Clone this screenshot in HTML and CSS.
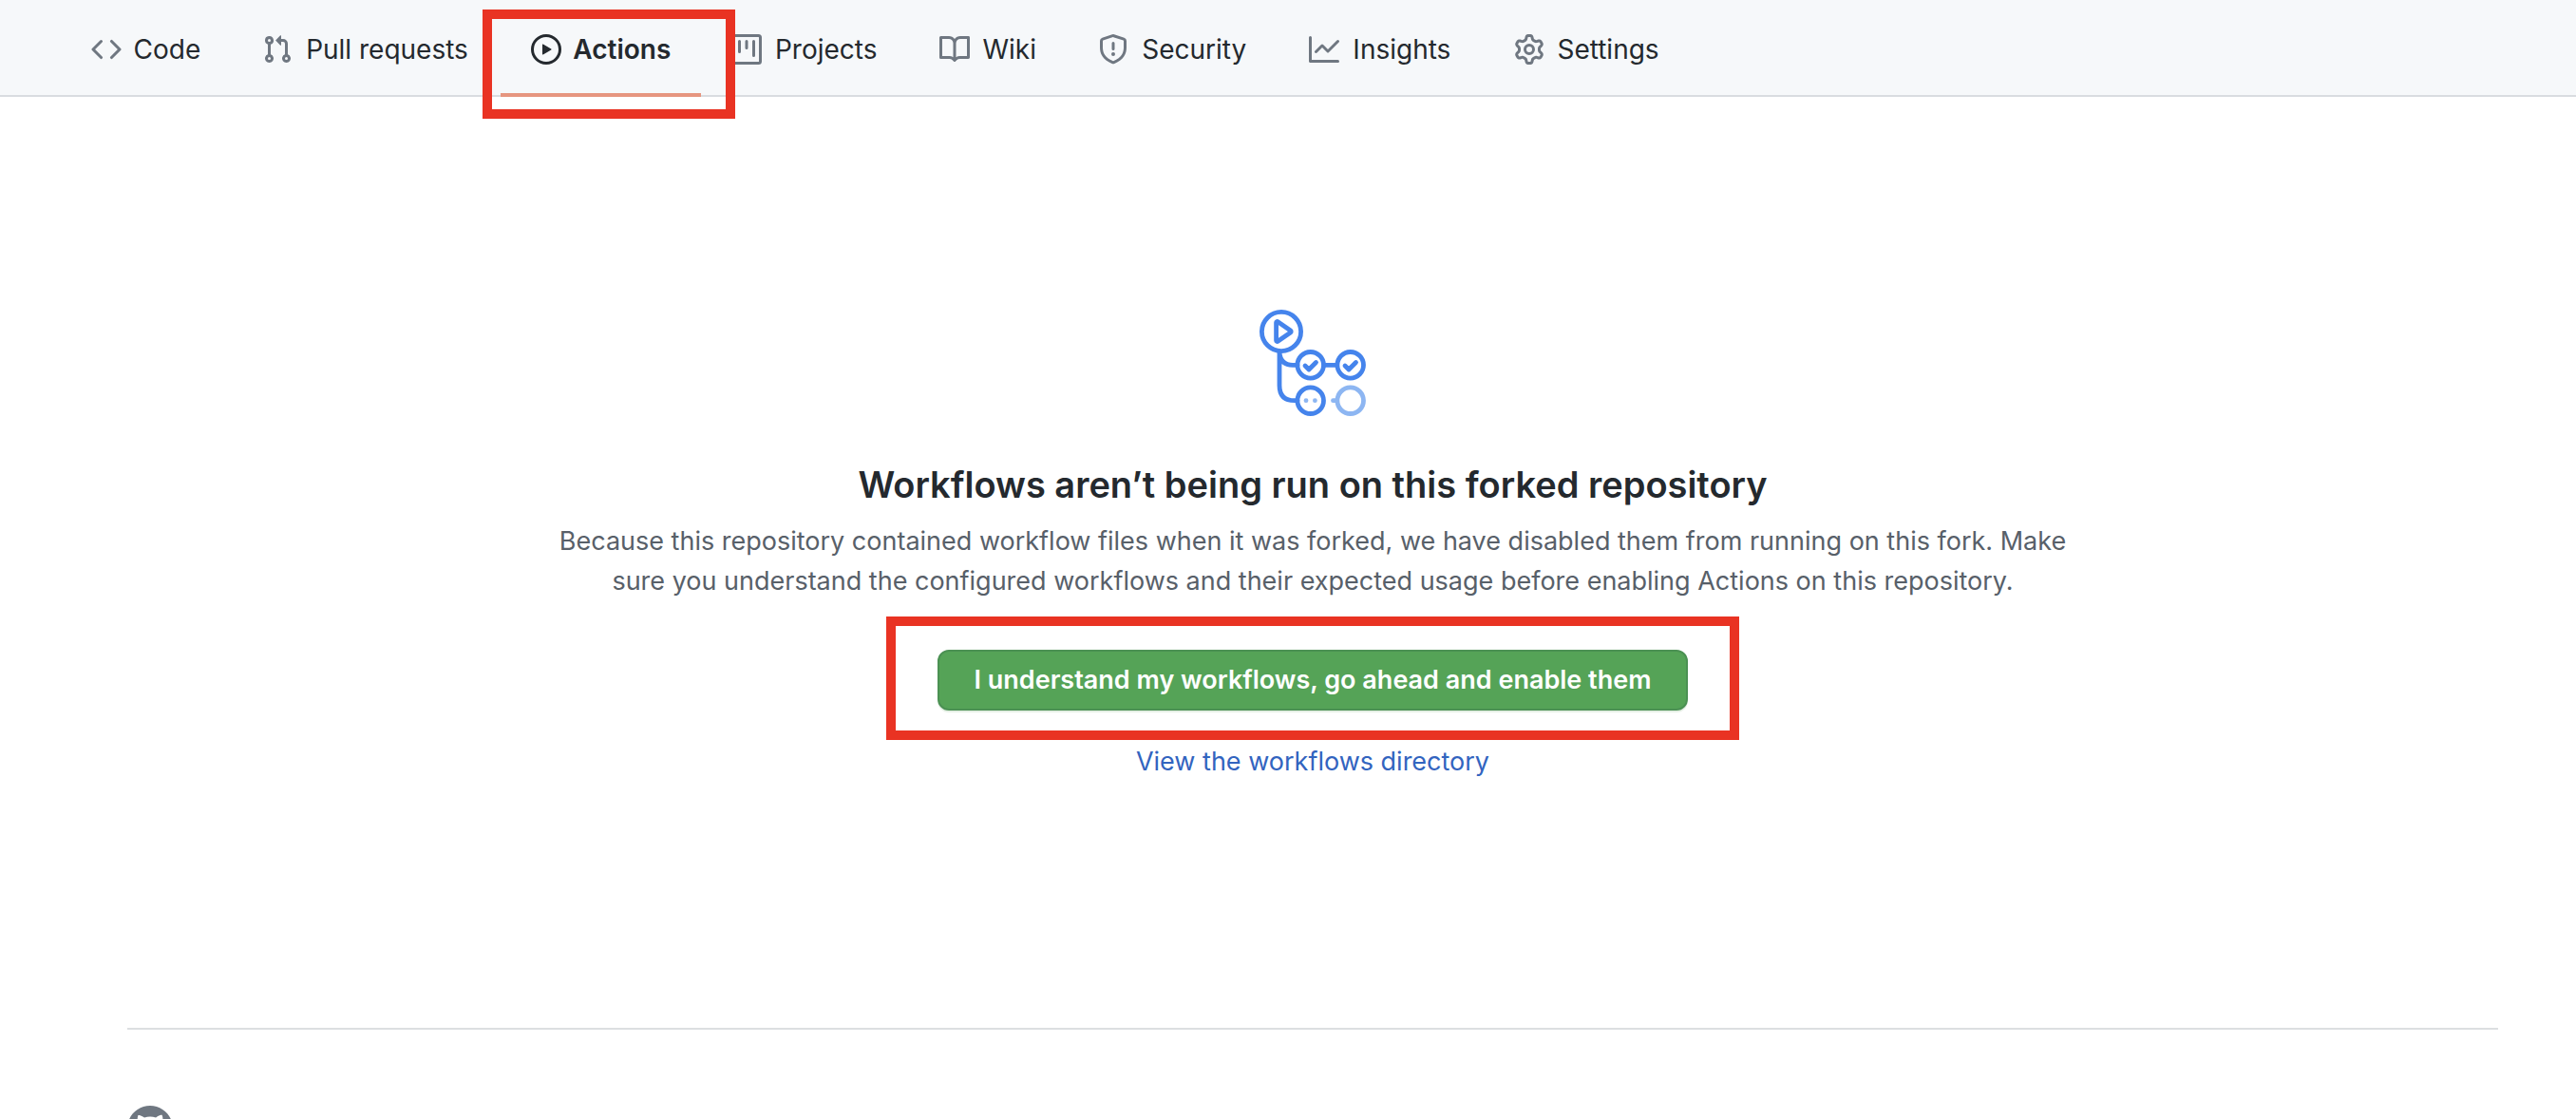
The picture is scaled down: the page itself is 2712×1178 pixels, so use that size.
FILE: index.html
```html
<!DOCTYPE html>
<html lang="en">
<head>
<meta charset="utf-8">
<meta name="viewport" content="width=device-width, initial-scale=1">
<title>Actions</title>
<link rel="stylesheet" href="styles.css">
</head>
<body>
<header class="repo-header">
  <nav class="tabs" aria-label="Repository">
    <a class="tab" href="#code">
      <svg class="tab-icon" viewBox="0 0 16 16" aria-hidden="true"><path fill-rule="evenodd" d="M4.72 3.22a.75.75 0 011.06 1.06L2.06 8l3.72 3.72a.75.75 0 11-1.06 1.06L.47 8.53a.75.75 0 010-1.06l4.25-4.25zm6.56 0a.75.75 0 10-1.06 1.06L13.94 8l-3.72 3.72a.75.75 0 101.06 1.06l4.25-4.25a.75.75 0 000-1.06l-4.25-4.25z"/></svg>
      <span class="tab-label" data-content="Code">Code</span>
    </a>
    <a class="tab" href="#pulls">
      <svg class="tab-icon" viewBox="0 0 16 16" aria-hidden="true"><path fill-rule="evenodd" d="M7.177 3.073L9.573.677A.25.25 0 0110 .854v4.792a.25.25 0 01-.427.177L7.177 3.427a.25.25 0 010-.354zM3.75 2.5a.75.75 0 100 1.5.75.75 0 000-1.5zm-2.25.75a2.25 2.25 0 113 2.122v5.256a2.251 2.251 0 11-1.5 0V5.372A2.25 2.25 0 011.5 3.25zM11 2.5h-1V4h1a1 1 0 011 1v5.628a2.251 2.251 0 101.5 0V5A2.5 2.5 0 0011 2.5zm1 10.25a.75.75 0 111.5 0 .75.75 0 01-1.5 0zM3.75 12a.75.75 0 100 1.5.75.75 0 000-1.5z"/></svg>
      <span class="tab-label" data-content="Pull requests">Pull requests</span>
    </a>
    <a class="tab tab-selected" href="#actions" aria-current="page">
      <svg class="tab-icon" viewBox="0 0 16 16" aria-hidden="true"><path fill-rule="evenodd" d="M1.5 8a6.5 6.5 0 1113 0 6.5 6.5 0 01-13 0zM8 0a8 8 0 100 16A8 8 0 008 0zM6.379 5.227A.25.25 0 006 5.442v5.117a.25.25 0 00.379.214l4.264-2.559a.25.25 0 000-.428L6.379 5.227z"/></svg>
      <span class="tab-label" data-content="Actions">Actions</span>
      <span class="highlight highlight-tab"></span>
    </a>
    <a class="tab" href="#projects">
      <svg class="tab-icon" viewBox="0 0 16 16" aria-hidden="true"><path fill-rule="evenodd" d="M1.75 0A1.75 1.75 0 000 1.75v12.5C0 15.216.784 16 1.75 16h12.5A1.75 1.75 0 0016 14.25V1.75A1.75 1.75 0 0014.25 0H1.75zM1.5 1.75a.25.25 0 01.25-.25h12.5a.25.25 0 01.25.25v12.5a.25.25 0 01-.25.25H1.75a.25.25 0 01-.25-.25V1.75zM11.75 3a.75.75 0 00-.75.75v7.5a.75.75 0 001.5 0v-7.5a.75.75 0 00-.75-.75zm-8.25.75a.75.75 0 011.5 0v5.5a.75.75 0 01-1.5 0v-5.5zM8 3a.75.75 0 00-.75.75v3.5a.75.75 0 001.5 0v-3.5A.75.75 0 008 3z"/></svg>
      <span class="tab-label" data-content="Projects">Projects</span>
    </a>
    <a class="tab" href="#wiki">
      <svg class="tab-icon" viewBox="0 0 16 16" aria-hidden="true"><path fill-rule="evenodd" d="M0 1.75A.75.75 0 01.75 1h4.253c1.227 0 2.317.59 3 1.501A3.744 3.744 0 0111.006 1h4.245a.75.75 0 01.75.75v10.5a.75.75 0 01-.75.75h-4.507a2.25 2.25 0 00-1.591.659l-.622.621a.75.75 0 01-1.06 0l-.622-.621A2.25 2.25 0 005.258 13H.75a.75.75 0 01-.75-.75V1.75zm8.755 3a2.25 2.25 0 012.25-2.25H14.5v9h-3.757c-.71 0-1.4.201-1.992.572l.004-7.322zm-1.504 7.324l.004-5.073-.002-2.253A2.25 2.25 0 005.003 2.5H1.5v9h3.757a3.75 3.75 0 011.994.574z"/></svg>
      <span class="tab-label" data-content="Wiki">Wiki</span>
    </a>
    <a class="tab" href="#security">
      <svg class="tab-icon" viewBox="0 0 16 16" aria-hidden="true"><path fill-rule="evenodd" d="M7.467.133a1.75 1.75 0 011.066 0l5.25 1.68A1.75 1.75 0 0115 3.48V7c0 1.566-.32 3.182-1.303 4.682-.983 1.498-2.585 2.813-5.032 3.855a1.7 1.7 0 01-1.33 0c-2.447-1.042-4.049-2.357-5.032-3.855C1.32 10.182 1 8.566 1 7V3.48a1.75 1.75 0 011.217-1.667l5.25-1.68zm.61 1.429a.25.25 0 00-.153 0l-5.25 1.68a.25.25 0 00-.174.238V7c0 1.358.275 2.666 1.057 3.86.784 1.194 2.121 2.34 4.366 3.297a.2.2 0 00.154 0c2.245-.956 3.582-2.104 4.366-3.298C13.225 9.666 13.5 8.36 13.5 7V3.48a.25.25 0 00-.174-.237l-5.25-1.68zM9 10.5a1 1 0 11-2 0 1 1 0 012 0zm-.25-5.75a.75.75 0 10-1.5 0v3a.75.75 0 001.5 0v-3z"/></svg>
      <span class="tab-label" data-content="Security">Security</span>
    </a>
    <a class="tab" href="#insights">
      <svg class="tab-icon" viewBox="0 0 16 16" aria-hidden="true"><path fill-rule="evenodd" d="M1.5 1.75a.75.75 0 00-1.5 0v12.5c0 .414.336.75.75.75h14.5a.75.75 0 000-1.5H1.5V1.75zm14.28 2.53a.75.75 0 00-1.06-1.06L10 7.94 7.53 5.47a.75.75 0 00-1.06 0L3.22 8.72a.75.75 0 001.06 1.06L7 7.06l2.47 2.47a.75.75 0 001.06 0l5.25-5.25z"/></svg>
      <span class="tab-label" data-content="Insights">Insights</span>
    </a>
    <a class="tab" href="#settings">
      <svg class="tab-icon" viewBox="0 0 16 16" aria-hidden="true"><path fill-rule="evenodd" d="M7.429 1.525a6.593 6.593 0 011.142 0c.036.003.108.036.137.146l.289 1.105c.147.56.55.967.997 1.189.174.086.341.183.501.29.417.278.97.423 1.53.27l1.102-.303c.11-.03.175.016.195.046.219.31.41.641.573.989.014.031.022.11-.059.19l-.815.806c-.411.406-.562.957-.53 1.456a4.588 4.588 0 010 .582c-.032.499.119 1.05.53 1.456l.815.806c.08.08.073.159.059.19a6.494 6.494 0 01-.573.99c-.02.029-.086.074-.195.045l-1.103-.303c-.559-.153-1.112-.008-1.529.27-.16.107-.327.204-.5.29-.449.222-.851.628-.998 1.189l-.289 1.105c-.029.11-.101.143-.137.146a6.613 6.613 0 01-1.142 0c-.036-.003-.108-.037-.137-.146l-.289-1.105c-.147-.56-.55-.967-.997-1.189a4.502 4.502 0 01-.501-.29c-.417-.278-.97-.423-1.53-.27l-1.102.303c-.11.03-.175-.016-.195-.046a6.492 6.492 0 01-.573-.989c-.014-.031-.022-.11.059-.19l.815-.806c.411-.406.562-.957.53-1.456a4.587 4.587 0 010-.582c.032-.499-.119-1.05-.53-1.456l-.815-.806c-.08-.08-.073-.159-.059-.19a6.44 6.44 0 01.573-.99c.02-.029.086-.075.195-.045l1.103.303c.559.153 1.112.008 1.529-.27.16-.107.327-.204.5-.29.449-.222.851-.628.998-1.189l.289-1.105c.029-.11.101-.143.137-.146zM8 0c-.236 0-.47.01-.701.03-.743.065-1.29.615-1.458 1.261l-.29 1.106c-.017.066-.078.158-.211.224a5.994 5.994 0 00-.668.386c-.123.082-.233.09-.3.071L3.27 2.776c-.644-.177-1.392.02-1.82.63a7.977 7.977 0 00-.704 1.217c-.315.675-.111 1.422.363 1.891l.815.806c.05.048.098.147.088.294a6.084 6.084 0 000 .772c.01.147-.038.246-.088.294l-.815.806c-.474.469-.678 1.216-.363 1.891.2.428.436.835.704 1.218.428.609 1.176.806 1.82.63l1.103-.303c.066-.019.176-.011.299.071.213.143.436.272.668.386.133.066.194.158.212.224l.289 1.106c.169.646.715 1.196 1.458 1.26a8.094 8.094 0 001.402 0c.743-.064 1.29-.614 1.458-1.26l.29-1.106c.017-.066.078-.158.211-.224a5.98 5.98 0 00.668-.386c.123-.082.233-.09.3-.071l1.102.302c.644.177 1.392-.02 1.82-.63.268-.382.505-.789.704-1.217.315-.675.111-1.422-.364-1.891l-.814-.806c-.05-.048-.098-.147-.088-.294a6.1 6.1 0 000-.772c-.01-.147.039-.246.088-.294l.814-.806c.475-.469.679-1.216.364-1.891a7.992 7.992 0 00-.704-1.218c-.428-.609-1.176-.806-1.82-.63l-1.103.303c-.066.019-.176.011-.299-.071a5.991 5.991 0 00-.668-.386c-.133-.066-.194-.158-.212-.224L10.16 1.29C9.99.645 9.444.095 8.701.031A8.094 8.094 0 008 0zm1.5 8a1.5 1.5 0 11-3 0 1.5 1.5 0 013 0zM11 8a3 3 0 11-6 0 3 3 0 016 0z"/></svg>
      <span class="tab-label" data-content="Settings">Settings</span>
    </a>
  </nav>
</header>
<main class="blank">
  <svg class="blank-icon" viewBox="0 0 114 114" fill="none" stroke="#4584ec" stroke-width="4.8" stroke-linecap="round" stroke-linejoin="round" aria-hidden="true">
    <circle cx="24" cy="24" r="20.6"/>
    <path d="M18.6 14.6v18.8c0 .9 1 1.400 1.700.900l13.400-9.300c.7-.5.7-1.500 0-2l-13.400-9.300c-.7-.5-1.700 0-1.700.9z"/>
    <path d="M22 46v34.700q0 16 16 16h3M22 46q1 13.300 14 13.300h5M69 59.300h13.500"/>
    <circle cx="54.700" cy="59.300" r="13.800"/>
    <circle cx="96.700" cy="59.300" r="13.800"/>
    <circle cx="54.700" cy="96.700" r="13.800"/>
    <path d="M49 60l4 4 7.500-7.500M91 60l4 4 7.500-7.500"/>
    <g stroke="#8db6f2"><path d="M78.500 96.700h4"/><circle cx="96.700" cy="96.700" r="13.800"/></g>
    <g fill="#8db6f2" stroke="none"><circle cx="50" cy="96.700" r="2.400"/><circle cx="59.400" cy="96.700" r="2.400"/></g>
  </svg>
  <h1 class="blank-title">Workflows aren’t being run on this forked repository</h1>
  <p class="blank-text">Because this repository contained workflow files when it was forked, we have disabled them from running on this fork. Make sure you understand the configured workflows and their expected usage before enabling Actions on this repository.</p>
  <div class="enable">
    <button class="enable-button" type="button">I understand my workflows, go ahead and enable them</button>
    <span class="highlight highlight-button"></span>
  </div>
  <a class="blank-link" href="#workflows">View the workflows directory</a>
</main>
<footer class="footer">
  <svg class="footer-mark" viewBox="0 0 16 16" role="img" aria-label="GitHub"><path fill-rule="evenodd" d="M8 0C3.580 0 0 3.580 0 8c0 3.540 2.290 6.530 5.470 7.590.4.070.550-.170.550-.380 0-.190-.010-.820-.010-1.490-2.010.370-2.530-.490-2.690-.940-.090-.230-.480-.940-.820-1.130-.280-.150-.680-.520-.010-.530.630-.010 1.080.580 1.230.820.720 1.210 1.870.870 2.330.660.070-.520.280-.870.510-1.070-1.780-.200-3.640-.890-3.640-3.950 0-.870.310-1.590.820-2.150-.080-.200-.360-1.020.080-2.120 0 0 .670-.210 2.200.820.640-.180 1.320-.270 2-.270.680 0 1.360.090 2 .270 1.530-1.040 2.200-.820 2.200-.820.440 1.100.160 1.920.080 2.120.510.560.820 1.270.820 2.150 0 3.070-1.870 3.750-3.650 3.950.290.250.540.730.540 1.480 0 1.070-.010 1.930-.010 2.200 0 .210.150.460.550.380A8.013 8.013 0 0016 8c0-4.420-3.580-8-8-8z"/></svg>
</footer>
</body>
</html>
```
FILE: styles.css
```css
* {
  box-sizing: border-box;
}

body {
  margin: 0;
  height: 100vh;
  overflow: hidden;
  background: #fff;
  color: #24292e;
  font-family: Inter, "Liberation Sans", sans-serif;
  font-size: 27px;
  line-height: 42px;
}

.repo-header {
  background: #f6f8fa;
  border-bottom: 2px solid #d9dce0;
  font-size: 28px;
}

.tabs {
  display: flex;
  padding-left: 64px;
}

.tab {
  position: relative;
  display: flex;
  align-items: center;
  gap: 12px;
  margin-bottom: -2px;
  padding: 31px 32px 25px;
  border-bottom: 4px solid transparent;
  color: #24292e;
  text-decoration: none;
}

.tab-selected {
  border-bottom-color: #e69680;
  font-weight: 600;
}

.tab-icon {
  width: 32px;
  height: 32px;
  fill: #6f7781;
}

.tab-selected .tab-icon {
  fill: #24292e;
}

/* Reserves the bold width so that tabs keep their place when selected. */
.tab-label {
  display: grid;
  justify-items: center;
}

.tab-label::before {
  content: attr(data-content);
  height: 0;
  overflow: hidden;
  visibility: hidden;
  font-weight: 600;
}

.highlight {
  position: absolute;
  z-index: 1;
  border: 10px solid #e93323;
  pointer-events: none;
}

.highlight-tab {
  inset: 10px -36px -27px -19px;
}

.highlight-button {
  inset: -35px -54px -31px -54px;
}

.blank {
  display: flex;
  flex-direction: column;
  align-items: center;
  margin: 0 82px 0 134px;
  padding: 223px 0 259px;
  border-bottom: 2px solid #dcdfe1;
  text-align: center;
}

.blank-icon {
  width: 114px;
  height: 114px;
}

.blank-title {
  margin: 41px 0 9px;
  font-size: 38px;
  font-weight: 600;
  line-height: 60px;
}

.blank-text {
  max-width: 1640px;
  margin: 0 0 51px;
  color: #586069;
}

.enable {
  position: relative;
  margin-bottom: 33px;
}

.enable-button {
  display: block;
  padding: 9px 36px;
  border: 2px solid #4b9153;
  border-radius: 12px;
  background: #55a357;
  box-shadow: 0 2px 0 #e6f0e6;
  color: #fff;
  font: inherit;
  font-weight: 600;
}

.blank-link {
  color: #3264bf;
  text-decoration: none;
}

.footer {
  padding: 80px 134px 0;
}

.footer-mark {
  display: block;
  width: 48px;
  height: 48px;
  fill: #6f7781;
}
```
